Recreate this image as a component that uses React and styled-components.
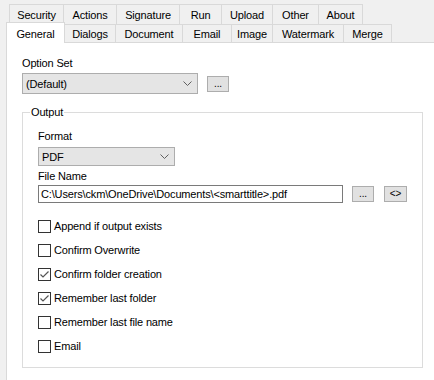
import React from "react";
import styled, { createGlobalStyle } from "styled-components";

const GlobalStyle = createGlobalStyle`
  body {
    margin: 0;
    background: #f0f0f0;
    font-family: "Liberation Sans", Arial, sans-serif;
    font-size: 11px;
    letter-spacing: -0.15px;
    color: #000;
  }
`;

const Window = styled.div`
  width: 434px;
  height: 380px;
  overflow: hidden;
  padding: 4px 0 0 6px;
  box-sizing: border-box;
`;

const TabRow = styled.div`
  display: flex;
  align-items: flex-start;
  height: ${(p) => p.$h}px;
  margin-left: ${(p) => p.$indent}px;
`;

const Tab = styled.div`
  box-sizing: border-box;
  width: ${(p) => p.$w}px;
  height: ${(p) => (p.$active ? 21 : p.$h)}px;
  margin-top: ${(p) => (p.$active ? -2 : 0)}px;
  display: flex;
  align-items: center;
  justify-content: center;
  padding-top: 1px;
  border-top: 1px solid #d9d9d9;
  border-right: 1px solid #d9d9d9;
  background: ${(p) => (p.$active ? "#fff" : "#f0f0f0")};
  position: ${(p) => (p.$active ? "relative" : "static")};
  z-index: ${(p) => (p.$active ? 1 : "auto")};
  &:first-child {
    border-left: 1px solid #d9d9d9;
  }
`;

const Page = styled.div`
  box-sizing: border-box;
  width: 440px;
  height: 350px;
  background: #fff;
  border: 1px solid #d9d9d9;
  padding: 14px 0 0 15px;
`;

const Label = styled.div`
  line-height: 13px;
  height: 13px;
  margin-bottom: ${(p) => p.$gap}px;
`;

const Row = styled.div`
  display: flex;
  align-items: center;
  height: ${(p) => p.$h}px;
  margin-bottom: ${(p) => p.$gap || 0}px;
`;

const Combo = styled.div`
  box-sizing: border-box;
  width: ${(p) => p.$w}px;
  height: ${(p) => p.$h}px;
  display: flex;
  align-items: center;
  justify-content: space-between;
  padding: 0 5px 0 3px;
  background: #e5e5e5;
  border: 1px solid #adadad;
  margin-bottom: ${(p) => p.$gap || 0}px;
`;

const TextBox = styled.div`
  box-sizing: border-box;
  width: 305px;
  height: 18px;
  display: flex;
  align-items: center;
  padding-left: 2px;
  background: #fff;
  border: 1px solid #7a7a7a;
  white-space: nowrap;
`;

const SmallButton = styled.div`
  box-sizing: border-box;
  width: ${(p) => p.$w}px;
  height: 16px;
  margin-left: ${(p) => p.$ml}px;
  display: flex;
  align-items: center;
  justify-content: center;
  background: #e1e1e1;
  border: 1px solid #adadad;
  font-size: 10px;
  line-height: 14px;
`;

const Group = styled.fieldset`
  box-sizing: border-box;
  width: 401px;
  margin: 12px 0 0 0;
  padding: 11px 15px 9px 15px;
  border: 1px solid #dcdcdc;
  min-width: 0;
`;

const Legend = styled.legend`
  padding: 0 1px;
  margin-left: -8px;
  line-height: 13px;
`;

const CheckRow = styled.div`
  display: flex;
  align-items: center;
  gap: 3px;
  height: 24px;
`;

const Box = styled.div`
  box-sizing: border-box;
  width: 13px;
  height: 13px;
  border: 1px solid #333;
  background: #fff;
  display: flex;
  align-items: center;
  justify-content: center;
`;

const Chevron = () => (
  <svg width="9" height="5" viewBox="0 0 9 5">
    <polyline points="0.5,0.5 4.5,4.5 8.5,0.5" fill="none" stroke="#606060" strokeWidth="1" />
  </svg>
);

const Check = () => (
  <svg width="11" height="11" viewBox="0 0 11 11">
    <polyline points="1.5,5.5 4,8 9.5,2.5" fill="none" stroke="#555" strokeWidth="1.2" />
  </svg>
);

const topTabs = [
  ["Security", 55],
  ["Actions", 53],
  ["Signature", 63],
  ["Run", 42],
  ["Upload", 51],
  ["Other", 46],
  ["About", 44],
];

const frontTabs = [
  ["General", 59],
  ["Dialogs", 51],
  ["Document", 67],
  ["Email", 49],
  ["Image", 41],
  ["Watermark", 71],
  ["Merge", 48],
];

const options = [
  ["Append if output exists", false],
  ["Confirm Overwrite", false],
  ["Confirm folder creation", true],
  ["Remember last folder", true],
  ["Remember last file name", false],
  ["Email", false],
];

export default function App() {
  return (
    <>
      <GlobalStyle />
      <Window>
        <TabRow $h={20} $indent={3}>
          {topTabs.map(([name, w]) => (
            <Tab key={name} $w={w} $h={20}>
              {name}
            </Tab>
          ))}
        </TabRow>
        <TabRow $h={18} $indent={0}>
          {frontTabs.map(([name, w], i) => (
            <Tab key={name} $w={w} $h={18} $active={i === 0}>
              {name}
            </Tab>
          ))}
        </TabRow>
        <Page>
          <Label $gap={3}>Option Set</Label>
          <Row $h={21}>
            <Combo $w={176} $h={21}>
              <span>(Default)</span>
              <Chevron />
            </Combo>
            <SmallButton $w={22} $ml={9}>...</SmallButton>
          </Row>
          <Group>
            <Legend>Output</Legend>
            <Label $gap={4}>Format</Label>
            <Combo $w={137} $h={19} $gap={4}>
              <span>PDF</span>
              <Chevron />
            </Combo>
            <Label $gap={2}>File Name</Label>
            <Row $h={18} $gap={11}>
              <TextBox>{"C:\\Users\\ckm\\OneDrive\\Documents\\<smarttitle>.pdf"}</TextBox>
              <SmallButton $w={22} $ml={9}>...</SmallButton>
              <SmallButton $w={23} $ml={10}>{"<>"}</SmallButton>
            </Row>
            {options.map(([text, checked]) => (
              <CheckRow key={text}>
                <Box>{checked && <Check />}</Box>
                <span>{text}</span>
              </CheckRow>
            ))}
          </Group>
        </Page>
      </Window>
    </>
  );
}
